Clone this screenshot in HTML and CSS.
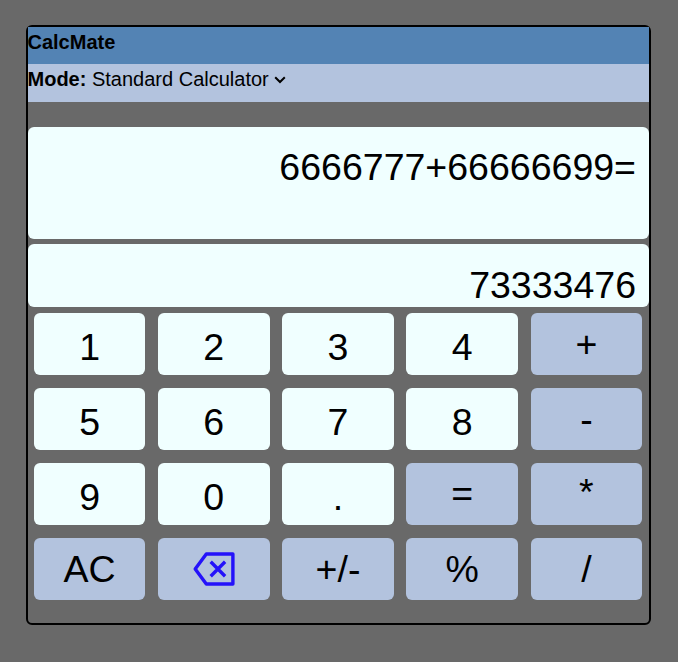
FILE: index.html
```html
<!DOCTYPE html>
<html lang="en">
<head>
<meta charset="utf-8">
<title>CalcMate</title>
<link rel="stylesheet" href="styles.css">
</head>
<body>
<main class="calculator">
  <header class="title">CalcMate</header>
  <div class="mode"><b>Mode:</b> <span class="mode-name">Standard Calculator</span><svg class="chevron" width="12" height="8" viewBox="0 0 12 8"><path d="M1.2 1.2 6 6l4.800-4.800" fill="none" stroke="#000" stroke-width="2"/></svg></div>
  <div class="display expression">6666777+66666699=</div>
  <div class="display result">73333476</div>
  <div class="keys">
    <button class="key num">1</button>
    <button class="key num">2</button>
    <button class="key num">3</button>
    <button class="key num">4</button>
    <button class="key">+</button>
    <button class="key num">5</button>
    <button class="key num">6</button>
    <button class="key num">7</button>
    <button class="key num">8</button>
    <button class="key">-</button>
    <button class="key num">9</button>
    <button class="key num">0</button>
    <button class="key num">.</button>
    <button class="key equals">=</button>
    <button class="key times">*</button>
    <button class="key">AC</button>
    <button class="key icon" aria-label="Backspace"><svg width="42" height="34" viewBox="0 0 42 34"><g fill="none" stroke="#2412fa" stroke-width="3.400"><path d="M13.300 2H39.900V32H13.300L2.200 17Z" stroke-linejoin="round"/><path d="M17.700 9.800 32.100 24.200M32.100 9.800 17.700 24.200"/></g></svg></button>
    <button class="key">+/-</button>
    <button class="key">%</button>
    <button class="key">/</button>
  </div>
</main>
</body>
</html>
```
FILE: styles.css
```css
* {
  box-sizing: border-box;
}

body {
  margin: 0;
  padding: 25px 27px 0 26px;
  background: #696969;
  color: #000;
  font: 20px/23px "Liberation Sans", Arial, sans-serif;
}

.calculator {
  height: 600px;
  border: 2px solid #000;
  border-radius: 6px;
}

.title {
  height: 37px;
  padding-top: 4px;
  background: #5383b4;
  font-weight: bold;
  text-indent: -0.5px;
}

.mode {
  height: 38px;
  padding-top: 4px;
  background: #b3c3de;
  white-space: nowrap;
  text-indent: -0.5px;
}

.chevron {
  margin-left: 5px;
  vertical-align: 2px;
}

.display {
  padding-right: 13px;
  border-radius: 6px;
  background: #f0ffff;
  font-size: 37.500px;
  line-height: 44px;
  text-align: right;
}

.expression {
  height: 112px;
  margin-top: 25px;
  padding-top: 18px;
}

.result {
  height: 63px;
  margin-top: 5px;
  padding-top: 19px;
}

.keys {
  display: grid;
  grid-template-columns: repeat(5, 1fr);
  gap: 13px 12.600px;
  padding: 6px 6.800px 0 5.800px;
}

.key {
  height: 62px;
  margin: 0;
  padding: 9px 0 0;
  border: 0;
  border-radius: 6px;
  background: #b3c3de;
  color: #000;
  font: 37.500px/44px "Liberation Sans", Arial, sans-serif;
  display: flex;
  justify-content: center;
  align-items: flex-start;
}

.key.num {
  padding-top: 12px;
  background: #f0ffff;
}

.key.equals {
  padding-top: 8px;
}

.key.times {
  padding-top: 7px;
}

.key.icon {
  padding-top: 14px;
}
```
